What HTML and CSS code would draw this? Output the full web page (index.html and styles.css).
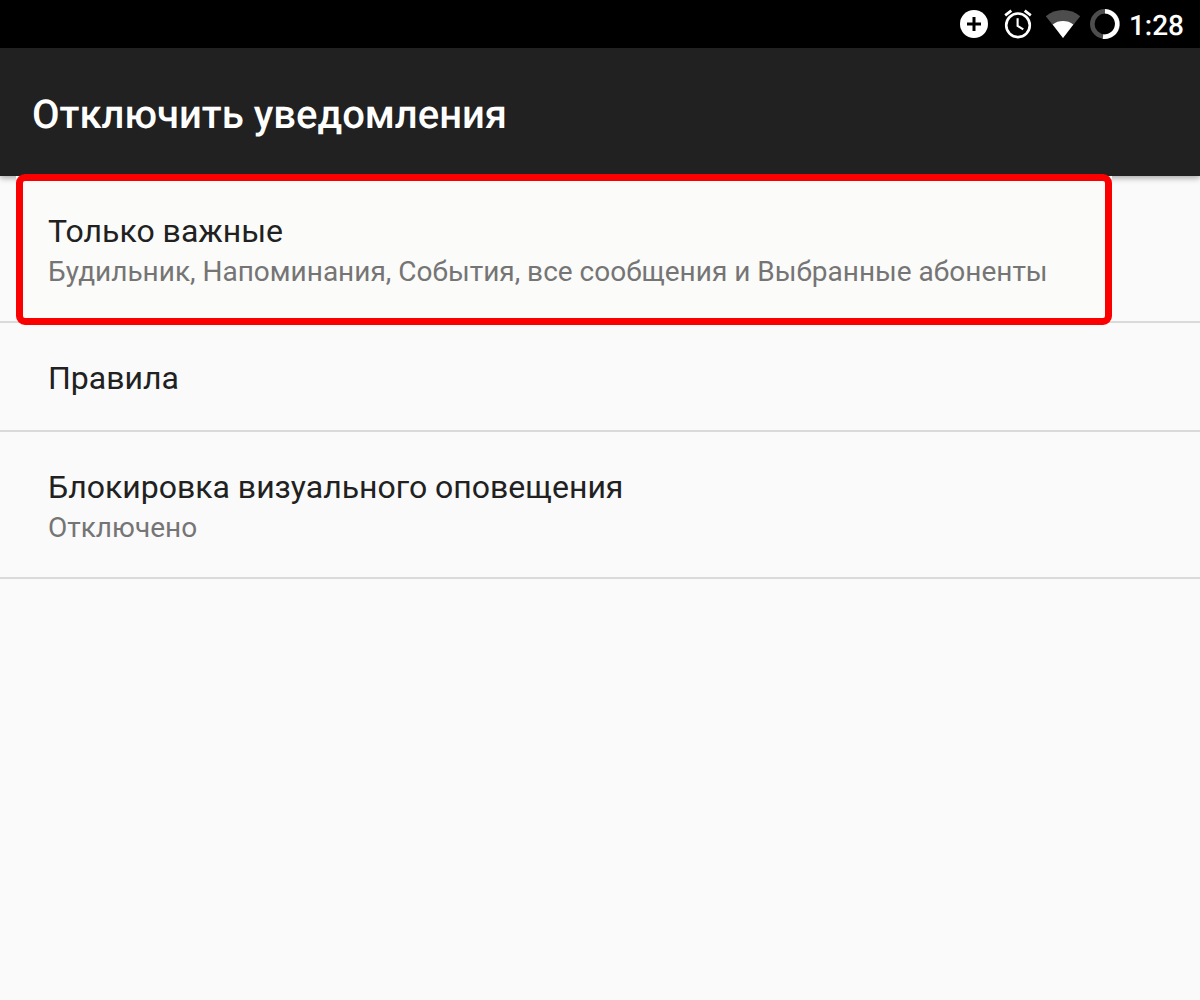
FILE: index.html
```html
<!DOCTYPE html>
<html lang="ru">
<head>
<meta charset="utf-8">
<meta name="viewport" content="width=device-width, initial-scale=1">
<title>Отключить уведомления</title>
<link rel="stylesheet" href="styles.css">
</head>
<body>
<div class="status-bar">
  <svg class="status-icon" viewBox="0 0 32 32" aria-hidden="true">
    <circle cx="16" cy="16" r="14" fill="#fff"/>
    <path d="M16 9v14M9 16h14" stroke="#000" stroke-width="3"/>
  </svg>
  <svg class="status-icon alarm" viewBox="0 0 32 32" fill="none" stroke="#fff" aria-hidden="true">
    <circle cx="16" cy="17.3" r="11.8" stroke-width="2.6"/>
    <path d="M3.2 7.4L9.3 2.6M28.8 7.4L22.7 2.6" stroke-width="2.7"/>
    <path d="M15.6 10.3v7.6l5.7 3.5" stroke-width="2.1"/>
  </svg>
  <svg class="status-icon wifi" viewBox="0 0 36 32" aria-hidden="true">
    <path d="M18 30L.8 8.2C5.8 4.2 11.6 2 18 2s12.200 2.200 17.200 6.200z" fill="#4d4d4d"/>
    <path d="M18 30L7.700 16.400C10.600 14.200 14.200 13 18 13s7.400 1.200 10.300 3.400z" fill="#fff"/>
  </svg>
  <svg class="status-icon battery" viewBox="0 0 32 32" fill="none" stroke-width="4.600" aria-hidden="true">
    <circle cx="16" cy="16" r="12.700" stroke="#4d4d4d"/>
    <path d="M16 3.300A12.700 12.700 0 1 1 14 28.600" stroke="#fff"/>
  </svg>
  <time class="clock">1:28</time>
</div>
<header class="app-bar">
  <h1 class="app-title">Отключить уведомления</h1>
</header>
<main class="settings">
  <button class="row highlighted" type="button">
    <span class="row-title">Только важные</span>
    <span class="row-summary">Будильник, Напоминания, События, все сообщения и Выбранные абоненты</span>
  </button>
  <button class="row" type="button">
    <span class="row-title">Правила</span>
  </button>
  <button class="row" type="button">
    <span class="row-title">Блокировка визуального оповещения</span>
    <span class="row-summary">Отключено</span>
  </button>
</main>
</body>
</html>
```
FILE: styles.css
```css
* {
  box-sizing: border-box;
}

body {
  margin: 0;
  min-height: 100vh;
  background: #fafafa;
  color: #212121;
  font-family: Roboto, "Noto Sans", sans-serif;
  text-rendering: geometricPrecision;
}

.status-bar {
  display: flex;
  align-items: center;
  justify-content: flex-end;
  height: 48px;
  padding-right: 16px;
  background: #000;
  color: #fff;
}

.status-icon {
  width: 32px;
  height: 32px;
  margin-right: 12px;
}

.alarm {
  margin-right: 11px;
}

.wifi {
  width: 36px;
  margin-right: 8px;
}

.battery {
  margin-right: 8px;
}

.clock {
  padding-top: 3px;
  font-size: 28px;
  font-weight: 500;
  line-height: 45px;
}

.app-bar {
  display: flex;
  align-items: center;
  min-height: 128px;
  padding: 6px 32px 0;
  background: #212121;
  color: #fff;
  box-shadow: 0 2px 6px rgba(0, 0, 0, 0.35);
}

.app-title {
  margin: 0;
  font-size: 40px;
  font-weight: 500;
  line-height: 48px;
}

.settings {
  display: flex;
  flex-direction: column;
}

.row {
  position: relative;
  isolation: isolate;
  display: flex;
  flex-direction: column;
  width: 100%;
  padding: 35px 48px 31px;
  border: 0;
  border-bottom: 2px solid #dadada;
  background: none;
  color: inherit;
  font: inherit;
  text-align: left;
  cursor: pointer;
}

.row-title {
  font-size: 32px;
  line-height: 41px;
}

.row-summary {
  padding-top: 2px;
  color: #757575;
  font-size: 28px;
  line-height: 36px;
}

.highlighted::before {
  content: "";
  position: absolute;
  z-index: -1;
  inset: 0 88px 0 16px;
  background: #fbfbf9;
}

.highlighted::after {
  content: "";
  position: absolute;
  inset: -2px 88px -4px 16px;
  border: 7px solid #fb0000;
  border-radius: 9px;
}
```
